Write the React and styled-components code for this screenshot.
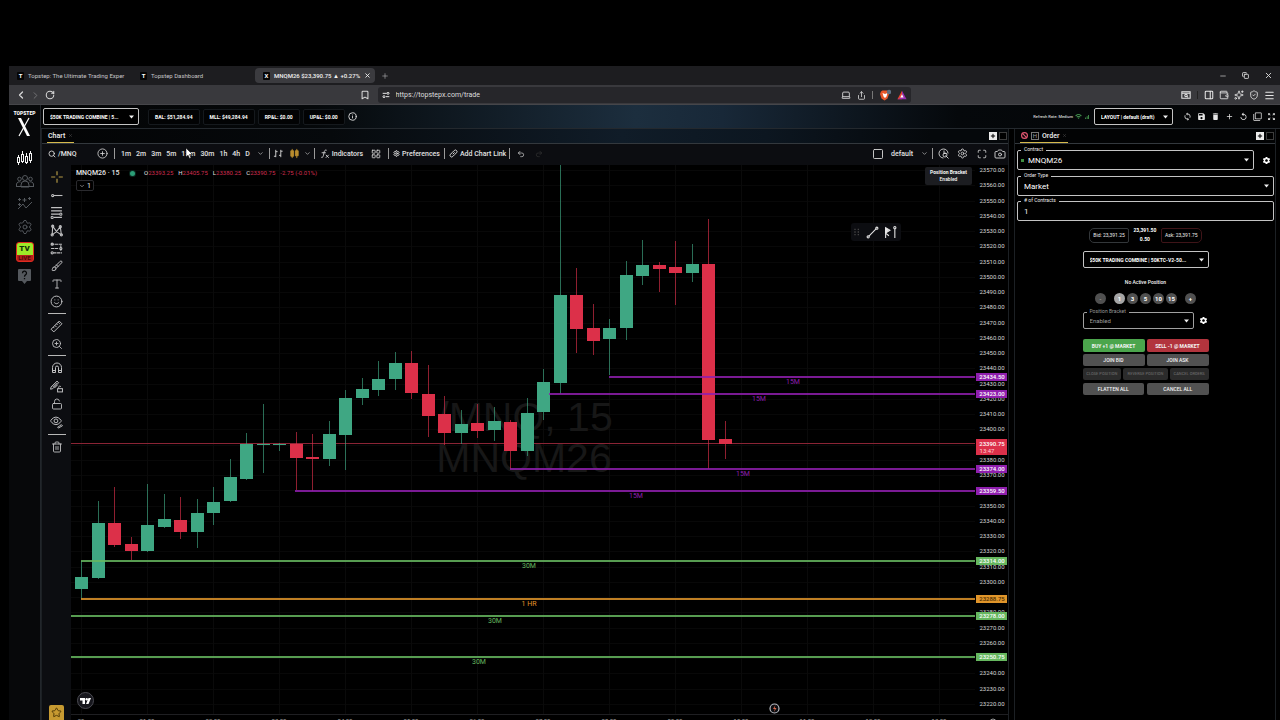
import React from "react";
import styled, { createGlobalStyle } from "styled-components";
import {
  Ban, Bookmark, Brush, Camera, ChevronDown, ChevronLeft, ChevronRight, CirclePlus, Copy, Info, Laptop,
  LayoutGrid, LockOpen, Maximize, Menu, Minus, PanelRight, Plus, Redo2, RotateCw, Search, Settings,
  Share, ShieldCheck, Smile, Sparkles, Square, Star, Trash2, Type, Undo2, Wallet, X, ZoomIn,
} from "lucide-react";
import { MdSettings, MdSave, MdDelete, MdAdd, MdReplay, MdFilterNone, MdZoomOutMap, MdSignalCellularAlt, MdWifi, MdSync } from "react-icons/md";

const ui = `Roboto, "Noto Sans", sans-serif`;

const Global = createGlobalStyle`
  * { box-sizing: border-box; }
  body { margin: 0; background: #000; color: #e6e6e6; font-family: ${ui}; font-size: 7px; overflow: hidden; }
  button, select, input { font: inherit; color: inherit; margin: 0; }
  a { color: inherit; text-decoration: none; }
  svg { display: block; flex: none; }
`;

const Page = styled.div`
  height: 100vh;
  padding: 66px 0 0 9px;
  display: flex;
  flex-direction: column;
  background: #000;
`;

/* browser chrome */
const TabStrip = styled.div`
  height: 19px;
  flex: none;
  display: flex;
  align-items: center;
  background: #1d1d20;
`;
const BrowserTab = styled.div`
  width: ${(p) => (p.$active ? 120 : 123)}px;
  height: 15px;
  padding: 0 4px 0 8px;
  display: flex;
  align-items: center;
  gap: 4px;
  border-radius: 4px;
  background: ${(p) => (p.$active ? "#3b3b3f" : "transparent")};
  color: ${(p) => (p.$active ? "#f2f2f2" : "#c4c4c6")};
  font-weight: ${(p) => (p.$active ? 500 : 400)};
  font-size: 6px;
  white-space: nowrap;
  overflow: hidden;
`;
const Favicon = styled.span`
  width: 7px;
  height: 8px;
  flex: none;
  display: grid;
  place-items: center;
  background: #050505;
  border-radius: 1px;
  color: #fff;
  font: 700 6px/8px ${ui};
`;
const TabTitle = styled.span`
  flex: 1;
`;
const Bare = styled.button`
  width: ${(p) => p.$w || 16}px;
  height: ${(p) => p.$h || 14}px;
  flex: none;
  padding: 0;
  display: grid;
  place-items: center;
  border: 0;
  background: none;
  color: ${(p) => p.$c || "#d8d8d8"};
`;
const Push = styled.div`
  margin-left: auto;
  display: flex;
  align-items: center;
  gap: ${(p) => p.$gap || 0}px;
`;
const NavBar = styled.div`
  height: 20px;
  flex: none;
  padding-top: 1px;
  display: grid;
  grid-template-columns: 29fr 42fr 29fr;
  align-items: center;
  background: #39393d;
  border-bottom: 1px solid #46464a;
`;
const NavGroup = styled.div`
  display: flex;
  align-items: center;
  padding: 0 5px 0 4px;
`;
const Address = styled.div`
  height: 16px;
  display: flex;
  align-items: center;
  gap: 6px;
  padding: 0 4px;
  border-radius: 3px;
  background: #26262a;
`;
const AddressInput = styled.input`
  flex: 1;
  min-width: 0;
  padding: 0;
  border: 0;
  background: none;
  color: #dedede;
  font-size: 7px;
`;
const Rule = styled.span`
  width: 1px;
  height: ${(p) => p.$h || 11}px;
  flex: none;
  margin: 0 ${(p) => (p.$m === undefined ? 4 : p.$m)}px;
  background: ${(p) => p.$c || "#9a9a9a"};
`;
const Spacer = styled.span`
  width: ${(p) => p.$w}px;
  flex: none;
`;

/* application shell */
const Shell = styled.div`
  flex: 1;
  min-height: 0;
  display: flex;
`;
const SideNav = styled.nav`
  width: 32px;
  flex: none;
  padding-top: 5px;
  display: flex;
  flex-direction: column;
  align-items: center;
  background: #07080a;
  border-right: 1px solid #22262b;
`;
const Brand = styled.a`
  height: 36px;
  display: flex;
  flex-direction: column;
  align-items: center;
  color: #fff;
  font: 900 5px/7px ${ui};
`;
const SideLink = styled.a`
  height: ${(p) => p.$h || 23}px;
  display: grid;
  place-items: center;
  color: ${(p) => (p.$on ? "#f4f4f4" : "#54585d")};
`;
const LiveBadge = styled.span`
  width: 18px;
  border: 1px solid #e02b20;
  border-radius: 3px;
  overflow: hidden;
  display: block;
  text-align: center;
  background: #b3201c;
  color: #4d0806;
  font: 700 6px/6px ${ui};
  b {
    display: block;
    background: #9dea28;
    color: #14330a;
    font-size: 8px;
    line-height: 12px;
  }
`;
const Main = styled.main`
  flex: 1;
  min-width: 0;
  display: flex;
  flex-direction: column;
`;
const TopBar = styled.header`
  height: 24px;
  flex: none;
  display: flex;
  align-items: center;
  gap: 3px;
  padding: 0 2px;
  border-bottom: 1px solid #24292e;
  background: linear-gradient(90deg, #040506 0%, #05080a 22%, #1c2e3e 48%, #182838 55%, #05080b 74%, #040506 100%);
`;
const SelectWrap = styled.span`
  position: relative;
  display: block;
  width: ${(p) => p.$w};
  svg {
    position: absolute;
    right: 5px;
    top: 50%;
    margin-top: -2px;
    pointer-events: none;
  }
`;
const Select = styled.select`
  appearance: none;
  display: block;
  width: 100%;
  height: ${(p) => p.$h}px;
  padding: 0 12px 0 ${(p) => (p.$pl === undefined ? 6 : p.$pl)}px;
  border: 1px solid ${(p) => p.$line || "#c4c4c4"};
  border-radius: 2px;
  background: #000;
  color: ${(p) => p.$c || "#fff"};
  font-size: ${(p) => p.$fs || 5}px;
  font-weight: ${(p) => p.$fw || 700};
`;
const Stat = styled.div`
  height: 16px;
  padding: 0 6px;
  border: 1px solid #15191d;
  border-radius: 2px;
  background: #020304;
  color: #fff;
  font-size: 5px;
  font-weight: 700;
  line-height: 14px;
  white-space: nowrap;
`;
const Rate = styled.span`
  font: 500 4px/8px ${ui};
  color: #d4d4d4;
  display: flex;
  align-items: center;
  gap: 2px;
`;
const Docks = styled.div`
  flex: 1;
  min-height: 0;
  padding-right: 4px;
  display: flex;
  gap: 5px;
`;
const Dock = styled.section`
  ${(p) => (p.$w ? `width: ${p.$w}px; flex: none;` : "flex: 1; min-width: 0;")}
  display: flex;
  flex-direction: column;
  border: solid #1c2024;
  border-width: 0 1px;
`;
const DockTabs = styled.div`
  height: 15px;
  flex: none;
  display: flex;
  align-items: center;
  padding: 0 1px 0 5px;
  border-bottom: 1px solid #33383d;
  background: ${(p) => (p.$glow ? "linear-gradient(90deg, #030405 0%, #06090c 30%, #101c28 60%, #0c1620 75%, #05080b 92%)" : "#020304")};
`;
const DockTab = styled.button`
  height: 14px;
  flex: none;
  display: flex;
  align-items: center;
  gap: 3px;
  padding: 0 1px;
  border: 0;
  border-bottom: 1px solid #d6ba4c;
  background: none;
  color: #f2f2f2;
  font: 500 7px/12px ${ui};
`;
const HBox = styled.span`
  width: 8px;
  height: 8px;
  border: 1px solid #777;
  color: #999;
  font: 400 6px/6px ${ui};
`;
const PlusBox = styled.button`
  width: 8px;
  height: 8px;
  padding: 0;
  display: grid;
  place-items: center;
  border: 1px solid ${(p) => (p.$empty ? "#3d3d3d" : "#ececec")};
  background: ${(p) => (p.$empty ? "#000" : "#ececec")};
  color: #000;
`;

/* chart pane */
const Tools = styled.div`
  height: 21px;
  flex: none;
  padding-bottom: 2px;
  display: flex;
  align-items: center;
  background: #0c0d11;
  color: #e2e2e2;
`;
const SearchBtn = styled.button`
  width: 52px;
  padding: 0 0 0 6px;
  display: flex;
  align-items: center;
  gap: 2px;
  border: 0;
  background: none;
  font-weight: 500;
`;
const ToolBtn = styled.button`
  padding: 0 ${(p) => (p.$p === undefined ? 3 : p.$p)}px;
  display: flex;
  align-items: center;
  gap: 2px;
  border: 0;
  background: none;
  font-weight: 500;
  line-height: 14px;
  white-space: nowrap;
`;
const Interval = styled(ToolBtn)`
  padding: 0 3px 0 2px;
`;
const ChartRow = styled.div`
  flex: 1;
  min-height: 0;
  display: flex;
`;
const DrawBar = styled.div`
  width: 29px;
  flex: none;
  padding-top: 3px;
  display: flex;
  flex-direction: column;
  align-items: center;
  background: #0c0d11;
  color: #c0c0c2;
`;
const DrawRule = styled.hr`
  width: 18px;
  height: 1px;
  margin: 3px 0;
  border: 0;
  background: #b8b8b8;
  flex: none;
`;
const StarBtn = styled.button`
  width: 15px;
  height: 15px;
  margin-top: auto;
  padding: 0;
  display: grid;
  place-items: center;
  border: 0;
  border-radius: 2px 2px 0 0;
  background: #c79a31;
  color: #4a3404;
`;
const PlotArea = styled.div`
  position: relative;
  flex: 1;
  min-width: 0;
  overflow: hidden;
`;
const Legend = styled.div`
  position: absolute;
  top: 3px;
  left: 5px;
  display: flex;
  align-items: center;
  gap: 5px;
  font: 400 6px/10px ${ui};
  color: #e0e0e0;
  white-space: nowrap;
  em { color: #d02e50; font-style: normal; }
`;
const Ticker = styled.span`
  width: 49px;
  color: #e6e6e6;
  font-size: 7px;
  font-weight: 500;
`;
const Dot = styled.i`
  width: 5px;
  height: 5px;
  margin-right: 4px;
  border-radius: 50%;
  background: #2b9e77;
  box-shadow: 0 0 0 1px #0b2a20;
`;
const Collapse = styled.button`
  position: absolute;
  top: 15px;
  left: 5px;
  height: 11px;
  padding: 0 2px;
  display: flex;
  align-items: center;
  gap: 2px;
  border: 1px solid #2a2a2e;
  border-radius: 2px;
  background: #000;
`;
const Floating = styled.div`
  position: absolute;
  top: 58px;
  right: 74px;
  width: 50px;
  height: 18px;
  display: flex;
  align-items: center;
  justify-content: space-between;
  padding: 0 4px 0 2px;
  border-radius: 3px;
  background: #0c0d11;
`;
const Notice = styled.div`
  position: absolute;
  top: 2px;
  right: 3px;
  width: 47px;
  height: 18px;
  padding-top: 2px;
  border-radius: 2px;
  background: #1c1d21;
  color: #f6f6f6;
  text-align: center;
  font: 500 5px/7px ${ui};
  b { display: block; }
`;
const TvLogo = styled.a`
  position: absolute;
  left: 6px;
  bottom: 11px;
`;
const Axis = styled.div`
  width: 33px;
  flex: none;
`;
const Cursor = styled.svg`
  position: absolute;
  left: 185px;
  top: 148px;
`;

/* order pane */
const OrderBody = styled.form`
  padding: 6px 1px 0 2px;
  display: flex;
  flex-direction: column;
`;
const Line = styled.div`
  display: flex;
  align-items: center;
  justify-content: ${(p) => p.$j || "flex-start"};
  gap: ${(p) => p.$gap || 0}px;
  margin-top: ${(p) => p.$mt || 0}px;
`;
const Field = styled.div`
  position: relative;
  flex: ${(p) => (p.$w ? `0 0 ${p.$w}px` : "1")};
  label {
    position: absolute;
    z-index: 1;
    left: 4px;
    top: -4px;
    padding: 0 3px;
    background: #000;
    color: ${(p) => (p.$dim ? "#999" : "#ececec")};
    font: 400 5px/7px ${ui};
  }
  i {
    position: absolute;
    z-index: 1;
    left: 4px;
    top: 9px;
    width: 3px;
    height: 3px;
    background: #3f8f3f;
  }
`;
const TextInput = styled.input`
  display: block;
  width: 100%;
  height: 20px;
  padding: 0 6px;
  border: 1px solid #c4c4c4;
  border-radius: 2px;
  background: #000;
  color: #f0f0f0;
  font: 400 8px/12px ${ui};
`;
const Quote = styled.span`
  height: 15px;
  padding: 0 3px;
  border: 1px solid ${(p) => (p.$ask ? "#3f1418" : "#33373a")};
  border-radius: ${(p) => (p.$ask ? "2px 5px 5px 2px" : "5px 2px 2px 5px")};
  color: #ececec;
  font: 400 5px/13px ${ui};
`;
const Last = styled.span`
  width: 32px;
  text-align: center;
  font: 700 5px/9px ${ui};
  color: #fff;
`;
const Center = styled.div`
  width: 126px;
  margin: 0 auto;
  display: flex;
  flex-direction: column;
`;
const Position = styled.p`
  margin: 10px 0 6px;
  text-align: center;
  color: #f6f6f6;
  font: 500 5px/9px ${ui};
`;
const Circle = styled.button`
  width: 11px;
  height: 11px;
  padding: 0;
  border: 0;
  border-radius: 50%;
  background: ${(p) => (p.$on ? "#a5a5a5" : "#505050")};
  color: ${(p) => (p.$off ? "#999" : "#fff")};
  font: 700 6px/11px ${ui};
`;
const Action = styled.button`
  flex: ${(p) => p.$flex || 1};
  height: ${(p) => p.$h || 12}px;
  padding: 0;
  border: 0;
  border-radius: 2px;
  background: ${(p) => p.$bg || "#515151"};
  color: ${(p) => p.$c || "#f4f4f4"};
  font: ${(p) => p.$fw || 500} ${(p) => p.$fs || 5}px/10px ${ui};
  white-space: nowrap;
`;

const Arrow = () => (
  <svg width="5" height="4" viewBox="0 0 5 4" aria-hidden="true"><path d="M0 0.5h5L2.500 3.500z" fill="#f0f0f0" /></svg>
);

const UP = "#3fa783";
const DOWN = "#dc3049";
/* direction, wick top, body top, body bottom, wick bottom: pixels below the pane top */
const CANDLES = [
  [1, 396, 412, 424, 434], [1, 336, 358, 413, 414], [0, 322, 358, 380, 382], [0, 372, 379, 386, 395],
  [1, 319, 360, 386, 387], [1, 329, 354, 362, 363], [0, 332, 355, 367, 374], [1, 334, 348, 367, 383],
  [1, 322, 337, 348, 360], [1, 294, 312, 336, 337], [1, 268, 279, 314, 315], [1, 239, 279, 280, 308],
  [1, 278, 279, 280, 286], [0, 267, 279, 293, 325], [0, 269, 292, 294, 326], [1, 256, 269, 294, 301],
  [1, 225, 233, 270, 305], [1, 213, 224, 233, 240], [1, 196, 214, 225, 231], [1, 187, 198, 214, 225],
  [0, 186, 198, 228, 234], [0, 200, 229, 251, 272], [0, 231, 249, 268, 280], [1, 245, 259, 268, 279],
  [0, 239, 258, 266, 273], [1, 242, 256, 265, 276], [0, 255, 257, 286, 304], [1, 233, 248, 286, 291],
  [1, 204, 217, 247, 255], [1, 0, 130, 218, 229], [0, 103, 130, 164, 188], [0, 139, 163, 176, 190],
  [1, 154, 163, 174, 210], [1, 96, 110, 163, 175], [1, 75, 100, 111, 120], [0, 97, 100, 104, 127],
  [0, 76, 102, 108, 140], [1, 79, 99, 108, 117], [0, 54, 99, 275, 304], [0, 256, 274, 279, 294],
];
const PURPLE = "#8f1fae";
const GREEN = "#66b75f";
const ORANGE = "#e0952a";
const LEVELS = [
  { price: 23434.5, from: 538, color: PURPLE, text: "15M", at: 722 },
  { price: 23423, from: 478, color: PURPLE, text: "15M", at: 688 },
  { price: 23374, from: 439, color: PURPLE, text: "15M", at: 672 },
  { price: 23359.5, from: 224, color: PURPLE, text: "15M", at: 565 },
  { price: 23314, from: 10, color: GREEN, text: "30M", at: 458 },
  { price: 23288.75, from: 10, color: ORANGE, text: "1 HR", at: 458 },
  { price: 23278, from: 0, color: GREEN, text: "30M", at: 424 },
  { price: 23250.75, from: 0, color: GREEN, text: "30M", at: 408 },
];
const yOf = (price) => Math.round(5 + ((23570 - price) * 534) / 350);
const xOf = (i) => Math.round(10 + i * 16.5);
const PRICES = Array.from({ length: 36 }, (_, i) => 23570 - i * 10);
const TIMES = ["29", "01:00", "02:00", "03:00", "04:00", "05:00", "06:00", "07:00", "08:00", "09:00", "10:00", "11:00", "12:00", "13:00"];

function Plot() {
  return (
    <svg width="100%" height="100%" role="img" aria-label="MNQM26 15 minute candles" fontFamily="Roboto, sans-serif">
      {PRICES.map((p) => <line key={p} x1="0" x2="100%" y1={yOf(p) + 0.5} y2={yOf(p) + 0.5} stroke="#080808" />)}
      {TIMES.map((t, i) => <line key={t} y1="0" y2="549" x1={xOf(i * 4) + 0.5} x2={xOf(i * 4) + 0.5} stroke="#0a0a0a" />)}
      <g fill="#171717" fontSize="41" textAnchor="middle" fontFamily="Liberation Sans, sans-serif">
        <text x="454" y="266">/MNQ, 15</text>
        <text x="453" y="307">MNQM26</text>
      </g>
      <rect x="0" y="278" width="100%" height="1" fill="#8a2435" />
      {CANDLES.map(([up, hi, top, bottom, lo], i) => (
        <g key={i} fill={up ? UP : DOWN}>
          <rect x={xOf(i)} y={hi} width="1" height={lo - hi} opacity="0.65" />
          <rect x={xOf(i) - 6} y={top} width="13" height={bottom - top} />
        </g>
      ))}
      {LEVELS.map((l) => (
        <g key={l.price}>
          <rect x={l.from} y={yOf(l.price) - 1} width="100%" height="2" fill={l.color} opacity="0.85" />
          <text x={l.at} y={yOf(l.price) + 7} fill={l.color} fontSize="7" textAnchor="middle">{l.text}</text>
        </g>
      ))}
      <line x1="0" x2="100%" y1="549.500" y2="549.500" stroke="#1f1f22" />
      <g fill="#a8a8a8" fontSize="6" textAnchor="middle">
        {TIMES.map((t, i) => <text key={t} x={xOf(i * 4)} y="558">{t}</text>)}
      </g>
      <circle cx="703.500" cy="543.500" r="4.500" fill="#0c0d11" stroke="#b9bcc4" strokeWidth="1.200" />
      <path d="M704.500 540l-2.500 4h1.800l-.8 3 2.500-4h-1.800z" fill="#d9694c" />
    </svg>
  );
}

function PriceAxis() {
  return (
    <svg width="33" height="100%" fontFamily="Roboto, sans-serif" fontSize="6" fill="#d6d6d6" textAnchor="middle">
      {PRICES.map((p) => p !== 23390 && <text key={p} x="17" y={yOf(p) + 2}>{p.toFixed(2)}</text>)}
      {LEVELS.map((l) => (
        <g key={l.price}>
          <rect x="1" y={yOf(l.price) - 4} width="31" height="8" fill={l.color} />
          <text x="17" y={yOf(l.price) + 2} fill={l.color === ORANGE ? "#4a2c00" : "#fff"} fontWeight="500">{l.price.toFixed(2)}</text>
        </g>
      ))}
      <rect x="1" y="274" width="31" height="16" fill={DOWN} />
      <text x="17" y="281" fill="#fff" fontWeight="500">23390.75</text>
      <text x="12" y="288" fill="#ffd0d6">13:47</text>
      <line x1="0" x2="33" y1="549.500" y2="549.500" stroke="#1f1f22" />
      <circle cx="18" cy="557" r="3" fill="none" stroke="#999" />
    </svg>
  );
}

const Glyph = ({ d, size = 12, sw = 1.5, children }) => (
  <svg width={size} height={size} viewBox="0 0 24 24" fill="none" stroke="currentColor" strokeWidth={sw} aria-hidden="true">
    {d && <path d={d} />}
    {children}
  </svg>
);

const DRAW = [
  ["Cross", 18, <Glyph key="a" size={14}><path stroke="#b59a45" strokeWidth="2" d="M12 2v7M12 15v7M2 12h7M15 12h7" /></Glyph>],
  ["Trend line", 18, <Glyph key="a" size={13} sw={2}><circle cx="5" cy="12" r="2" /><path d="M7 12h16" /></Glyph>],
  ["Fib retracement", 17, <Glyph key="a" size={13} sw={2}><path d="M2 3h20M2 9h20M2 15h16M7 21h15" /><circle cx="20" cy="15" r="2" /><circle cx="4" cy="21" r="2" /></Glyph>],
  ["Patterns", 18, <Glyph key="a" size={13} sw={2}><path d="M4 20L5 4l7 10 7-9 2 15-9-6-8 6" /><circle cx="4" cy="20" r="2" /><circle cx="5" cy="4" r="2" /><circle cx="19" cy="5" r="2" /><circle cx="21" cy="20" r="2" /></Glyph>],
  ["Forecasting", 18, <Glyph key="a" size={13} sw={2}><path d="M2 4h20M2 12h14M6 20h16M20 6v10" strokeDasharray="6 1" /><circle cx="4" cy="20" r="2" /><circle cx="4" cy="4" r="2" /><circle cx="20" cy="12" r="2" /></Glyph>],
  ["Brush", 18, <Brush key="a" size={12} strokeWidth={2} />],
  ["Text", 17, <Type key="a" size={12} strokeWidth={1.8} />],
  ["Icons", 18, <Smile key="a" size={13} strokeWidth={1.8} />],
  null,
  ["Measure", 18, <Glyph key="a" size={13} sw={1.800}><path d="M2 17L17 2l5 5L7 22zM6 13l2 2M9 10l3 3M12 7l2 2M15 4l3 3" /></Glyph>],
  ["Zoom in", 17, <ZoomIn key="a" size={12} strokeWidth={1.800} />],
  null,
  ["Magnet", 18, <Glyph key="a" size={12} sw={2}><path d="M3 21V11a9 9 0 0 1 18 0v10h-6V11a3 3 0 0 0-6 0v10zM3 17h6M15 17h6" /></Glyph>],
  ["Keep drawing", 18, <Glyph key="a" size={13} sw={1.800}><path d="M2 13L13 2l3 3L5 16l-4 1zM5 13l8-8M8 15l6-6" /><rect x="14" y="16" width="9" height="6" /><path d="M16 16v-2a2 2 0 0 1 4-1" /></Glyph>],
  ["Lock drawings", 18, <LockOpen key="a" size={12} strokeWidth={1.800} />],
  ["Hide drawings", 18, <Glyph key="a" size={13} sw={1.800}><path d="M1 9s4-7 10-7 10 7 10 7-4 7-10 7S1 9 1 9z" /><circle cx="11" cy="9" r="3.500" /><path d="M14 21l7-5 2 2-7 4z" /></Glyph>],
  null,
  ["Remove", 18, <Trash2 key="a" size={12} strokeWidth={1.800} />],
];

export default function App() {
  return (
    <>
      <Global />
      <Page>
        <TabStrip>
          <BrowserTab><Favicon>T</Favicon><TabTitle>Topstep: The Ultimate Trading Exper</TabTitle></BrowserTab>
          <BrowserTab><Favicon>T</Favicon><TabTitle>Topstep Dashboard</TabTitle></BrowserTab>
          <BrowserTab $active><Favicon>X</Favicon><TabTitle>MNQM26 $23,390.75 ▲ +0.27%</TabTitle><X size={7} strokeWidth={3} /></BrowserTab>
          <Bare $w={20} aria-label="New tab" $c="#a8a8aa"><Plus size={8} /></Bare>
          <Push>
            <Bare $w={23} aria-label="Minimise"><Minus size={8} /></Bare>
            <Bare $w={23} aria-label="Restore"><Copy size={7} strokeWidth={3} /></Bare>
            <Bare $w={23} aria-label="Close"><X size={9} strokeWidth={2.500} /></Bare>
          </Push>
        </TabStrip>
        <NavBar>
          <NavGroup>
            <Bare aria-label="Back"><ChevronLeft size={12} strokeWidth={2.500} /></Bare>
            <Bare $w={13} aria-label="Forward" $c="#77777a"><ChevronRight size={11} /></Bare>
            <Bare aria-label="Reload"><RotateCw size={10} strokeWidth={2.500} /></Bare>
            <Push><Bare aria-label="Bookmark"><Bookmark size={10} strokeWidth={2.500} /></Bare></Push>
          </NavGroup>
          <Address>
            <Glyph size={8} sw={3}><path d="M2 7h12M12 17h10" /><circle cx="18" cy="7" r="3" /><circle cx="6" cy="17" r="3" /></Glyph>
            <AddressInput aria-label="Address" defaultValue="https://topstepx.com/trade" />
            <Laptop size={10} /><Share size={9} /><Rule $m={0} $h={8} $c="#777" />
            <Glyph size={12} sw={0}><path d="M4 5l3-2h9l3 2 1 5-3 9-6 4-6-4-3-9z" fill="#e9572b" /><path d="M7 8l5 2 5-2-2 7-3 3-3-3z" fill="#fff" /><circle cx="20" cy="6" r="4.500" fill="#5e6e80" /></Glyph>
            <Glyph size={10} sw={0}><path d="M12 2L1 22h11V15z" fill="#e8452c" /><path d="M12 2l11 20H1l11-5z" fill="#9b2fae" /><path d="M12 10l4 8H8z" fill="#fff" /></Glyph>
          </Address>
          <NavGroup>
            <Push $gap={5}>
              <Glyph size={10} sw={2.500}><path d="M2 4h20v16H2zM2 8h20" /><circle cx="12" cy="13" r="3" /><path d="M14 15l3 3" /></Glyph>
              <Rule $h={8} $m={1} $c="#222" /><PanelRight size={10} strokeWidth={2.500} />
              <Wallet size={10} /><Sparkles size={10} /><ShieldCheck size={10} /><Menu size={11} strokeWidth={2.500} />
            </Push>
          </NavGroup>
        </NavBar>

        <Shell>
          <SideNav>
            <Brand href="#">TOPSTEP
              <svg width="14" height="20" viewBox="0 0 14 20"><path d="M1 1h3l9 18h-3z" fill="#fff" /><path d="M12 1L2 19" stroke="#fff" strokeWidth="1.200" /></svg>
            </Brand>
            <SideLink href="#" $on aria-label="Trade">
              <svg width="17" height="16" viewBox="0 0 17 16" fill="none" stroke="currentColor"><path d="M2.500 5v2M2.500 12v3M6.500 1v3M6.500 11v2M10.500 3v3M10.500 12v2M14.500 1v2M14.500 10v3" /><rect x="1.500" y="7.500" width="2" height="5" /><rect x="5.500" y="4.500" width="2" height="7" /><rect x="9.500" y="6.500" width="2" height="6" /><rect x="13.500" y="3.500" width="2" height="7" /></svg>
            </SideLink>
            <SideLink href="#" aria-label="Leaderboard">
              <svg width="18" height="14" viewBox="0 0 18 14" fill="none" stroke="currentColor"><circle cx="9" cy="4" r="2.500" /><circle cx="3.500" cy="5" r="1.800" /><circle cx="14.500" cy="5" r="1.800" /><path d="M5 13v-2a4 4 0 0 1 8 0v2zM.5 12v-2a3 3 0 0 1 4-2M17.500 12v-2a3 3 0 0 0-4-2M0 12.500h18" /></svg>
            </SideLink>
            <SideLink href="#" aria-label="Activity">
              <svg width="16" height="14" viewBox="0 0 16 14" fill="none" stroke="currentColor"><path d="M1 12l5-5 3 4 6-6M2.500 1v3M1 2.500h3M7.500 1v4M5.500 3h4M12.500 0v3M11 1.500h3M2.500 6v3M1 7.500h3" /></svg>
            </SideLink>
            <SideLink href="#" aria-label="Settings"><Settings size={16} strokeWidth={1.500} /></SideLink>
            <SideLink href="#" $h={27}><LiveBadge><b>TV</b>LIVE</LiveBadge></SideLink>
            <SideLink href="#" aria-label="Help">
              <svg width="13" height="15" viewBox="0 0 13 15"><path d="M1 0h11a1 1 0 0 1 1 1v10a1 1 0 0 1-1 1H9l-2.500 3L4 12H1a1 1 0 0 1-1-1V1a1 1 0 0 1 1-1z" fill="currentColor" /><path d="M4.500 4.200a2 2 0 1 1 3 1.700c-.8.500-1 .9-1 1.800M6.500 9v1.300" stroke="#07080a" strokeWidth="1.300" fill="none" /></svg>
            </SideLink>
          </SideNav>

          <Main>
            <TopBar>
              <SelectWrap $w="96px"><Select $h={17} aria-label="Account"><option>$50K TRADING COMBINE | 5...</option></Select><Arrow /></SelectWrap>
              <Spacer $w={3} />
              <Stat>BAL: $51,284.94</Stat><Stat>MLL: $49,284.94</Stat><Stat>RP&amp;L: $0.00</Stat><Stat>UP&amp;L: $0.00</Stat>
              <Bare $w={10} aria-label="Information"><Info size={9} strokeWidth={2.500} /></Bare>
              <Push>
                <Rate>Refresh Rate: Medium <MdWifi size={7} color="#4fae5a" /><MdSignalCellularAlt size={6} color="#4fae5a" /></Rate>
                <Spacer $w={4} />
                <SelectWrap $w="79px"><Select $h={17} aria-label="Layout"><option>LAYOUT | default (draft)</option></Select><Arrow /></SelectWrap>
                <Spacer $w={7} />
                {[["Sync", MdSync], ["Save", MdSave], ["Delete", MdDelete], ["Add", MdAdd], ["Reset", MdReplay], ["Windows", MdFilterNone], ["Expand", MdZoomOutMap]].map(([n, I]) => (
                  <Bare key={n} $w={14} aria-label={n} $c="#e6e6e6"><I size={9} /></Bare>
                ))}
              </Push>
            </TopBar>
            <Docks>
              <Dock>
                <DockTabs $glow>
                  <DockTab>Chart <X size={5} color="#555" /></DockTab>
                  <Push $gap={2}><PlusBox aria-label="Add tab"><Plus size={6} strokeWidth={4} /></PlusBox><PlusBox $empty aria-label="Maximise" /></Push>
                </DockTabs>
                <Tools>
                  <SearchBtn><Search size={8} strokeWidth={2.500} />/MNQ</SearchBtn>
                  <Bare aria-label="Compare"><CirclePlus size={11} strokeWidth={1.800} /></Bare>
                  <Rule />
                  {["1m", "2m", "3m", "5m", "15m", "30m", "1h", "4h", "D"].map((t) => <Interval key={t}>{t}</Interval>)}
                  <Bare aria-label="More intervals"><ChevronDown size={7} /></Bare>
                  <Rule $m={0} />
                  <Bare $w={18} aria-label="Bar style"><Glyph size={11} sw={2}><path d="M6 4v16M2 18h4M6 8h4M17 4v16M13 16h4M17 7h4" /></Glyph></Bare>
                  <Bare $w={14} aria-label="Candles" $c="#b98c2e"><Glyph size={11} sw={2}><path d="M7 2v20M17 2v20" /><path d="M4 6h6v12H4zM14 6h6v11h-6z" fill="currentColor" /></Glyph></Bare>
                  <Bare $w={12} aria-label="Chart type"><ChevronDown size={7} /></Bare>
                  <Rule $m={0} />
                  <ToolBtn $p={5}><Glyph size={10} sw={2}><path d="M16 3c-5-2-6 3-7 9s-2 9-6 8M4 9h10M14 14l7 7M21 14l-7 7" /></Glyph>Indicators</ToolBtn>
                  <Bare aria-label="Layout grid"><LayoutGrid size={10} /></Bare>
                  <Rule />
                  <ToolBtn $p={0}><Settings size={7} strokeWidth={3} />Preferences</ToolBtn>
                  <Rule />
                  <ToolBtn $p={0}><Glyph size={9} sw={2.500}><path d="M10 14l5-5M9 9l5-5a4 4 0 0 1 6 6l-5 5M15 15l-5 5a4 4 0 0 1-6-6l5-5" /></Glyph>Add Chart Link</ToolBtn>
                  <Rule $m={3} />
                  <Bare aria-label="Undo"><Undo2 size={8} /></Bare>
                  <Bare $w={20} aria-label="Redo" $c="#333"><Redo2 size={8} /></Bare>
                  <Push>
                    <Bare $w={19} aria-label="Select layout"><Square size={12} strokeWidth={1.800} /></Bare>
                    <ToolBtn $p={4}>default</ToolBtn>
                    <Bare $w={14} aria-label="Layouts"><ChevronDown size={7} /></Bare>
                    <Rule $m={1} />
                    <Bare $w={19} aria-label="Quick search"><Glyph size={12} sw={1.800}><path d="M20 11a9 9 0 1 0-9 9M12 5v6h5M15 15l6 6" /><circle cx="14" cy="14" r="4" /></Glyph></Bare>
                    <Bare $w={19} aria-label="Settings"><Settings size={11} strokeWidth={1.800} /></Bare>
                    <Bare $w={19} aria-label="Fullscreen"><Maximize size={10} /></Bare>
                    <Bare $w={17} aria-label="Snapshot"><Camera size={12} strokeWidth={1.800} /></Bare>
                  </Push>
                </Tools>
                <ChartRow>
                  <DrawBar>
                    {DRAW.map((d, i) => (d ? <Bare key={i} $w={18} $h={d[1]} $c="inherit" aria-label={d[0]}>{d[2]}</Bare> : <DrawRule key={i} />))}
                    <StarBtn aria-label="Favourites"><Star size={11} /></StarBtn>
                  </DrawBar>
                  <PlotArea>
                    <Plot />
                    <Legend>
                      <Ticker>MNQM26 · 15</Ticker><Dot />
                      <span>O<em>23393.25</em></span><span>H<em>23405.75</em></span><span>L<em>23380.25</em></span><span>C<em>23390.75</em></span><em>-2.75 (-0.01%)</em>
                    </Legend>
                    <Collapse><ChevronDown size={6} />1</Collapse>
                    <Notice><b>Position Bracket</b>Enabled</Notice>
                    <Floating>
                      <Glyph size={8} sw={0}><path fill="#444" d="M4 2h4v4H4zM14 2h4v4h-4zM4 10h4v4H4zM14 10h4v4h-4zM4 18h4v4H4zM14 18h4v4h-4z" /></Glyph>
                      <Glyph size={13} sw={2}><path d="M5 19L19 5" /><circle cx="4" cy="20" r="2" /><circle cx="20" cy="4" r="2" /></Glyph>
                      <Glyph size={13} sw={2}><path d="M3 22V3M3 13l6 5M20 22V5" /><circle cx="20" cy="3" r="2" /><path d="M3 3l8 5-8 5z" /><path d="M4 5l4 3-4 3z" fill="currentColor" /></Glyph>
                    </Floating>
                    <TvLogo href="#" aria-label="TradingView">
                      <svg width="17" height="17" viewBox="0 0 17 17"><circle cx="8.500" cy="8.500" r="8" fill="#17171d" stroke="#4a4a52" /><path d="M3 6h5v6H5.500V8.500H3zM11.500 6H14l-2.500 6H9z" fill="#fff" /><circle cx="9.700" cy="7.200" r="1.200" fill="#fff" /></svg>
                    </TvLogo>
                  </PlotArea>
                  <Axis><PriceAxis /></Axis>
                </ChartRow>
              </Dock>

              <Dock $w={262}>
                <DockTabs>
                  <DockTab><Ban size={7} strokeWidth={4} color="#e05570" /><HBox>H</HBox>Order <X size={5} color="#555" /></DockTab>
                  <Push $gap={2}><PlusBox aria-label="Add tab"><Plus size={6} strokeWidth={4} /></PlusBox><PlusBox $empty aria-label="Maximise" /></Push>
                </DockTabs>
                <OrderBody>
                  <Line $gap={4}>
                    <Field><label htmlFor="contract">Contract</label><i /><SelectWrap $w="100%"><Select id="contract" $h={20} $fs={8} $fw={400} $pl={10}><option>MNQM26</option></Select><Arrow /></SelectWrap></Field>
                    <Bare type="button" aria-label="Contract settings" $c="#fff"><MdSettings size={9} /></Bare>
                  </Line>
                  <Line $mt={6}>
                    <Field><label htmlFor="type">Order Type</label><SelectWrap $w="100%"><Select id="type" $h={20} $fs={8} $fw={400}><option>Market</option></Select><Arrow /></SelectWrap></Field>
                  </Line>
                  <Line $mt={5}>
                    <Field><label htmlFor="count"># of Contracts</label><TextInput id="count" defaultValue="1" /></Field>
                  </Line>
                  <Line $mt={5} $j="center">
                    <Quote>Bid: 23,391.25</Quote><Last>23,391.50<br />0.50</Last><Quote $ask>Ask: 23,391.75</Quote>
                  </Line>
                  <Center>
                    <Line $mt={7}><SelectWrap $w="100%"><Select $h={17} aria-label="Order account"><option>$50K TRADING COMBINE | 50KTC-V2-50...</option></Select><Arrow /></SelectWrap></Line>
                    <Position>No Active Position</Position>
                    <Line $gap={2} $j="center">
                      <Circle type="button" $off>-</Circle><Spacer $w={4} />
                      <Circle type="button" $on>1</Circle><Circle type="button">3</Circle><Circle type="button">5</Circle><Circle type="button">10</Circle><Circle type="button">15</Circle>
                      <Spacer $w={4} /><Circle type="button">+</Circle>
                    </Line>
                    <Line $mt={8}>
                      <Field $w={111} $dim><label htmlFor="bracket">Position Bracket</label><SelectWrap $w="100%"><Select id="bracket" $h={17} $fs={6} $fw={400} $c="#9c9c9c" $line="#a0a0a0"><option>Enabled</option></Select><Arrow /></SelectWrap></Field>
                      <Bare type="button" $w={20} aria-label="Bracket settings" $c="#fff"><MdSettings size={9} /></Bare>
                    </Line>
                    <Line $mt={10} $gap={2}><Action type="button" $h={13} $fw={700} $bg="#4ba54c">BUY +1 @ MARKET</Action><Action type="button" $h={13} $fw={700} $bg="#b2343d">SELL -1 @ MARKET</Action></Line>
                    <Line $mt={2} $gap={2}><Action type="button">JOIN BID</Action><Action type="button">JOIN ASK</Action></Line>
                    <Line $mt={2} $gap={2}><Action type="button" disabled $flex="38" $fs={4} $bg="#2b2b2b" $c="#666">CLOSE POSITION</Action><Action type="button" disabled $flex="44" $fs={4} $bg="#2b2b2b" $c="#666">REVERSE POSITION</Action><Action type="button" disabled $flex="38" $fs={4} $bg="#2b2b2b" $c="#666">CANCEL ORDERS</Action></Line>
                    <Line $mt={3} $gap={3}><Action type="button">FLATTEN ALL</Action><Action type="button">CANCEL ALL</Action></Line>
                  </Center>
                </OrderBody>
              </Dock>
            </Docks>
          </Main>
        </Shell>
        <Cursor width="8" height="11" viewBox="0 0 8 11"><path d="M1 0v9l2-2 1.500 3.500 1.500-.7L4.500 6.500h3z" fill="#fff" stroke="#000" strokeWidth="0.500" /></Cursor>
      </Page>
    </>
  );
}
